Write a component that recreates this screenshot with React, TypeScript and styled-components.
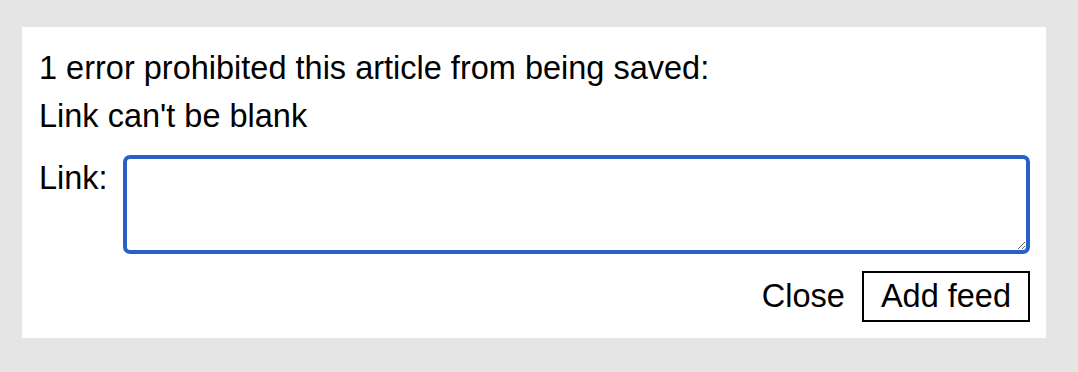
import React from 'react'
import styled, { createGlobalStyle } from 'styled-components'

const GlobalStyle = createGlobalStyle`
  body {
    margin: 0;
    background: #e5e5e5;
    font-family: 'Liberation Sans', Arial, sans-serif;
  }
`

const Page = styled.div`
  padding: 27px 32px 34px 22px;
`

const Panel = styled.form`
  background: #fff;
  width: 1024px;
  box-sizing: border-box;
  padding: 22px 16px 16px 17px;
  display: flex;
  flex-direction: column;
  color: #000;
  font-size: 32.5px;
`

const Errors = styled.div`
  display: flex;
  flex-direction: column;
  gap: 10px;
  line-height: 38px;
`

const Field = styled.div`
  display: flex;
  gap: 15px;
  margin-top: 20px;
`

const Label = styled.label`
  line-height: 38px;
  padding-top: 4px;
`

const TextArea = styled.textarea`
  flex: 1;
  height: 99px;
  box-sizing: border-box;
  border: 4px solid #2a5fc8;
  border-radius: 7px;
  outline: none;
  font: inherit;
  padding: 4px 6px;
`

const Actions = styled.div`
  display: flex;
  justify-content: flex-end;
  align-items: center;
  gap: 17px;
  margin-top: 17px;
`

const LinkButton = styled.span`
  cursor: pointer;
`

const Button = styled.button`
  font: inherit;
  background: #fff;
  color: #000;
  border: 2px solid #000;
  border-radius: 0;
  height: 51px;
  padding: 0 17px;
`

const App = () => {
  return (
    <>
      <GlobalStyle />
      <Page>
        <Panel onSubmit={(e) => e.preventDefault()}>
          <Errors>
            <div>1 error prohibited this article from being saved:</div>
            <div>Link can't be blank</div>
          </Errors>
          <Field>
            <Label htmlFor='link'>Link:</Label>
            <TextArea id='link' />
          </Field>
          <Actions>
            <LinkButton>Close</LinkButton>
            <Button type='submit'>Add feed</Button>
          </Actions>
        </Panel>
      </Page>
    </>
  )
}

export default App
